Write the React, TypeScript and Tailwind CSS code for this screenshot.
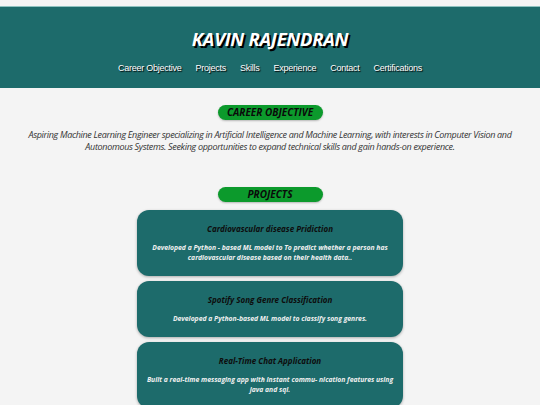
const navItems = ["Career Objective", "Projects", "Skills", "Experience", "Contact", "Certifications"];

const projects = [
  {
    title: "Cardiovascular disease Pridiction",
    desc: "Developed a Python - based ML model to To predict whether a person has cardiovascular disease based on their health data..",
  },
  {
    title: "Spotify Song Genre Classification",
    desc: "Developed a Python-based ML model to classify song genres.",
  },
  {
    title: "Real-Time Chat Application",
    desc: "Built a real-time messaging app with instant commu- nication features using java and sql.",
  },
];

const SectionBadge = ({ label }: { label: string }) => (
  <div className="flex justify-center">
    <h2 className="w-[105px] h-[15px] rounded-full bg-[#0c9a2c] text-[#0a0a0a] text-[10px] leading-[15px] font-bold italic text-center shadow-[0_1px_2px_rgba(0,0,0,0.25)]">
      {label}
    </h2>
  </div>
);

export default function App() {
  return (
    <div className="min-h-screen bg-[#f4f4f4] pt-[6px] overflow-hidden" style={{ fontFamily: '"Open Sans", sans-serif' }}>
      <header className="h-[82px] bg-[#1d6b6b] border-t border-[#8fc2c0] flex flex-col items-center pt-[20px]">
        <h1 className="text-[18.5px] leading-[24px] font-bold italic text-white tracking-[-0.3px] [text-shadow:2px_2px_0_#000]">
          KAVIN RAJENDRAN
        </h1>
        <nav className="mt-[10px] flex gap-[14px] text-[9px] leading-[14px] tracking-[-0.25px] text-white [text-shadow:1px_1px_1px_#000]" style={{ fontFamily: '"Liberation Sans", Arial, sans-serif' }}>
          {navItems.map((item) => (
            <a key={item} href="#">{item}</a>
          ))}
        </nav>
      </header>

      <main className="pt-[17px]">
        <section>
          <SectionBadge label="CAREER OBJECTIVE" />
          <p className="mt-[9px] px-[26px] text-center text-[9px] leading-[12px] tracking-[-0.32px] italic text-[#333]">
            Aspiring Machine Learning Engineer specializing in Artificial Intelligence and Machine Learning, with interests in Computer Vision and Autonomous Systems. Seeking opportunities to expand technical skills and gain hands-on experience.
          </p>
        </section>

        <section className="mt-[34px]">
          <SectionBadge label="PROJECTS" />
          <div className="mt-[8px] flex flex-col items-center gap-[5px]">
            {projects.map((p) => (
              <div key={p.title} className="w-[266px] rounded-[12px] bg-[#1d6b6b] px-[8px] pt-[13px] pb-[13px] text-center shadow-[0_1px_3px_rgba(0,0,0,0.3)]">
                <h3 className="text-[8px] leading-[12px] font-bold italic text-[#0d0d0d]">{p.title}</h3>
                <p className="mt-[8px] text-[6.8px] leading-[10px] font-bold italic text-[#f0f0f0]">{p.desc}</p>
              </div>
            ))}
          </div>
        </section>
      </main>
    </div>
  );
}
